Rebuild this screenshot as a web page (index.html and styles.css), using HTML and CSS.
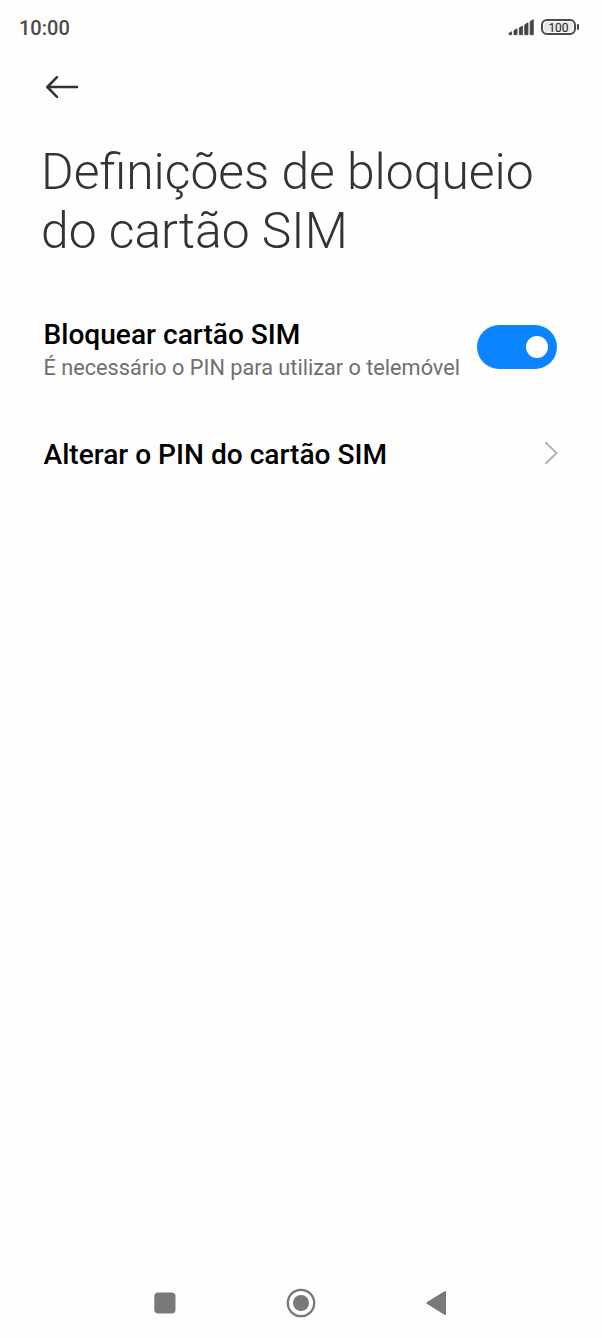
FILE: index.html
```html
<!DOCTYPE html>
<html lang="pt">
<head>
<meta charset="utf-8">
<title>Definições de bloqueio do cartão SIM</title>
<link rel="stylesheet" href="styles.css">
</head>
<body>
<header class="status">
  <span class="time">10:00</span>
  <svg class="signal" viewBox="0 0 26 17" width="26" height="17"><path d="M1 14.200L3.600 12.700V15.700H1zM6 11.500L9 9.800V15.700H6zM11.300 8.800L14.500 7V15.700H11.300zM16.700 5.800L20 3.800V15.700H16.700zM22.200 2.500L25.300.7V15.700H22.200z"/></svg>
  <div class="battery"><span class="level">100</span></div>
</header>
<nav class="toolbar">
  <svg class="back" viewBox="0 0 34 24" width="34" height="24"><path d="M32 12H2.500M12 2.200L2.300 12l9.700 9.800"/></svg>
</nav>
<h1 class="title">Definições de bloqueio<br>do cartão SIM</h1>
<main class="list">
  <section class="row row-lock">
    <div class="copy"><h2 class="name">Bloquear cartão SIM</h2><p class="hint">É necessário o PIN para utilizar o telemóvel</p></div>
    <div class="switch"><span class="knob"></span></div>
  </section>
  <section class="row">
    <h2 class="name">Alterar o PIN do cartão SIM</h2>
    <svg class="chevron" viewBox="0 0 14 24" width="14" height="24"><path d="M2 1.800l10.500 10.200L2 22.200"/></svg>
  </section>
</main>
<footer class="navbar">
  <svg viewBox="0 0 32 32" width="32" height="32"><rect x="5.300" y="5.500" width="21.200" height="21" rx="4"/></svg>
  <svg viewBox="0 0 32 32" width="32" height="32"><circle cx="16" cy="16" r="13.200" class="ring"/><circle cx="16" cy="16" r="8"/></svg>
  <svg class="nav-back" viewBox="0 0 32 32" width="32" height="32"><path d="M6.300 16L24 5v22z"/></svg>
</footer>
</body>
</html>
```
FILE: styles.css
```css
* { box-sizing: border-box; }
body { margin: 0; height: 1338px; background: #fefefe; font-family: Roboto, sans-serif; display: flex; flex-direction: column; overflow: hidden; }
h1, h2, p { margin: 0; white-space: nowrap; }
svg { display: block; flex: none; }
.status { height: 56px; display: flex; align-items: center; padding: 0 23px 2px 19px; }
.time { font-size: 20px; line-height: 24px; font-weight: 500; color: #4a4a4a; flex: 1; padding-top: 2px; }
.signal { fill: #444; stroke: #444; stroke-width: .8; stroke-linejoin: round; margin-right: 7px; }
.battery { position: relative; width: 35px; height: 16px; margin-right: 3px; border: 2px solid #4a4a4a; border-radius: 6px; background: #e8e8e8; box-shadow: inset 0 0 0 1px #fefefe; display: flex; align-items: center; justify-content: center; }
.battery::after { content: ""; position: absolute; right: -5px; top: 3px; width: 2px; height: 6px; background: #4a4a4a; border-radius: 0 1px 1px 0; }
.level { font-size: 12px; line-height: 12px; font-weight: 400; color: #222; padding-top: 1px; }
.toolbar { height: 62px; padding: 19px 0 0 45px; }
.back { fill: none; stroke: #333; stroke-width: 2.500; stroke-linecap: round; stroke-linejoin: round; }
.title { margin: 25px 0 0 41px; font-size: 49.800px; line-height: 59px; font-weight: 300; color: #333; }
.list { padding: 26px 44px 0 43.500px; }
.row { display: flex; align-items: center; justify-content: space-between; height: 92px; }
.row-lock { height: 120px; padding-right: 1px; }
.copy { padding-top: 6px; }
.name { font-size: 28.100px; line-height: 36px; font-weight: 500; color: #000; }
.row > .name { padding-top: 4px; }
.hint { font-size: 21.700px; line-height: 30px; color: #6f6f6f; }
.switch { width: 80px; height: 44px; border-radius: 22px; background: #0d84ff; display: flex; align-items: center; justify-content: flex-end; padding-right: 9px; flex: none; }
.knob { width: 22px; height: 22px; border-radius: 50%; background: #fff; }
.chevron { fill: none; stroke: #b3b3b3; stroke-width: 2; stroke-linecap: round; }
.navbar { margin-top: auto; height: 70px; display: flex; align-items: center; justify-content: space-between; padding: 0 149px; fill: #797979; }
.ring { fill: none; stroke: #797979; stroke-width: 2.300; }
.nav-back { stroke: #797979; stroke-width: 2; stroke-linejoin: round; }
```
